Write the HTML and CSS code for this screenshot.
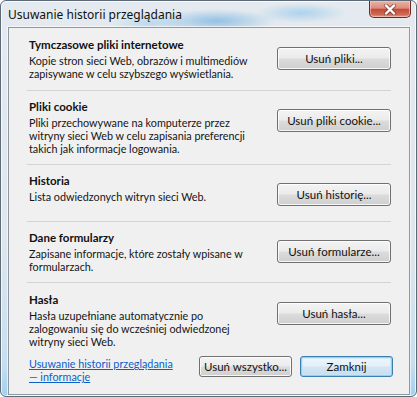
FILE: index.html
```html
<!DOCTYPE html>
<html lang="pl">
<head>
<meta charset="utf-8">
<title>Usuwanie historii przeglądania</title>
<link rel="stylesheet" href="styles.css">
</head>
<body>
<div class="window">
  <div class="titlebar">
    <span class="title">Usuwanie historii przeglądania</span>
    <button class="close" aria-label="Zamknij">
      <svg width="18" height="11" viewBox="0 0 18 11">
        <path d="M5 1.5 L13 9.5 M13 1.5 L5 9.5" stroke="#5a2a22" stroke-width="4.2" stroke-linecap="round" fill="none" opacity="0.55"/>
        <path d="M5 1.5 L13 9.5 M13 1.5 L5 9.5" stroke="#ffffff" stroke-width="2.4" stroke-linecap="round" fill="none"/>
      </svg>
    </button>
  </div>
  <div class="client">
    <div class="section first">
      <div class="text">
        <div class="head">Tymczasowe pliki internetowe</div>
        <div class="desc">Kopie stron sieci Web, obrazów i multimediów<br>zapisywane w celu szybszego wyświetlania.</div>
      </div>
      <button class="btn">Usuń pliki...</button>
    </div>
    <div class="section">
      <div class="text">
        <div class="head">Pliki cookie</div>
        <div class="desc">Pliki przechowywane na komputerze przez<br>witryny sieci Web w celu zapisania preferencji<br>takich jak informacje logowania.</div>
      </div>
      <button class="btn">Usuń pliki cookie...</button>
    </div>
    <div class="section short">
      <div class="text">
        <div class="head">Historia</div>
        <div class="desc">Lista odwiedzonych witryn sieci Web.</div>
      </div>
      <button class="btn">Usuń historię...</button>
    </div>
    <div class="section">
      <div class="text">
        <div class="head">Dane formularzy</div>
        <div class="desc">Zapisane informacje, które zostały wpisane w<br>formularzach.</div>
      </div>
      <button class="btn">Usuń formularze...</button>
    </div>
    <div class="section last">
      <div class="text">
        <div class="head">Hasła</div>
        <div class="desc">Hasła uzupełniane automatycznie po<br>zalogowaniu się do wcześniej odwiedzonej<br>witryny sieci Web.</div>
      </div>
      <button class="btn">Usuń hasła...</button>
    </div>
    <div class="footer">
      <a class="link" href="#">Usuwanie historii przeglądania<br>— informacje</a>
      <div class="actions">
        <button class="btn small">Usuń wszystko...</button>
        <button class="btn small default">Zamknij</button>
      </div>
    </div>
  </div>
</div>
</body>
</html>
```
FILE: styles.css
```css
html, body {
  margin: 0;
  padding: 0;
  background: #ffffff;
}

.window {
  box-sizing: border-box;
  width: 417px;
  height: 397px;
  border: 1px solid #5d6b78;
  border-radius: 6px;
  padding: 0 6px 10px 7px;
  display: flex;
  flex-direction: column;
  font-family: Lato, "Noto Sans", sans-serif;
  font-size: 11px;
  color: #141414;
  background:
    radial-gradient(ellipse 60px 12px at 215px 20px, rgba(120,180,225,0.75), rgba(120,180,225,0) 100%),
    radial-gradient(ellipse 45px 10px at 300px 12px, rgba(150,200,235,0.7), rgba(150,200,235,0) 100%),
    radial-gradient(ellipse 40px 9px at 150px 22px, rgba(160,205,235,0.6), rgba(160,205,235,0) 100%),
    radial-gradient(ellipse 120px 14px at 200px 395px, rgba(120,190,235,0.85), rgba(120,190,235,0) 100%),
    linear-gradient(to bottom, #e4eaef 0%, #dfe6ec 60%, #c7def0 92%, #9fd1f0 100%);
  box-shadow: inset 0 0 0 1px rgba(255,255,255,0.75);
}

.titlebar {
  height: 26px;
  display: flex;
  align-items: flex-start;
  justify-content: space-between;
  flex-shrink: 0;
}

.title {
  font-family: "Noto Sans", "DejaVu Sans", sans-serif;
  font-size: 12px;
  color: #111;
  padding-top: 5px;
}

.close {
  width: 42px;
  height: 17px;
  margin: 0 -1px 0 0;
  padding: 0;
  border: 1px solid #6b2b22;
  border-top: none;
  border-radius: 0 0 5px 5px;
  background: linear-gradient(to bottom, #eab3a4 0%, #dc8c79 45%, #c5493a 52%, #cf6a55 85%, #e7a18c 100%);
  box-shadow: inset 0 0 0 1px rgba(255,210,200,0.55);
  display: flex;
  align-items: center;
  justify-content: center;
}

.client {
  flex: 1;
  border: 1px solid #8d98a3;
  background: #f0f0f0;
  padding: 0 18px 11px 18px;
  display: flex;
  flex-direction: column;
  box-shadow: 0 0 0 1px rgba(255,255,255,0.6);
}

.section {
  display: flex;
  align-items: flex-start;
  justify-content: space-between;
  padding: 9px 0 9px 0;
  border-bottom: 1px solid #d4d4d4;
}

.section.first { padding-top: 10px; padding-bottom: 10px; }
.section.short { padding-bottom: 15px; }
.section.last { border-bottom: none; padding-bottom: 0; padding-top: 10px; }

.text {
  padding-left: 2px;
}

.head {
  font-weight: bold;
  font-size: 11.5px;
  line-height: 14px;
  margin-bottom: 2px;
  color: #111;
}

.desc {
  font-size: 10.8px;
  line-height: 13px;
  color: #141414;
}

.btn {
  box-sizing: border-box;
  width: 114px;
  height: 23px;
  margin-top: 9px;
  padding: 0;
  font-family: Lato, "Noto Sans", sans-serif;
  font-size: 11.5px;
  color: #111;
  border: 1px solid #707070;
  border-radius: 3px;
  background: linear-gradient(to bottom, #f3f3f3 0%, #ebebeb 49%, #dcdcdc 51%, #cfcfcf 100%);
  box-shadow: inset 0 0 0 1px rgba(255,255,255,0.8);
}

.footer {
  display: flex;
  align-items: flex-start;
  justify-content: space-between;
  margin-top: 8px;
}

.link {
  padding-left: 2px;
  padding-top: 1px;
  font-size: 10.8px;
  color: #0a5fc8;
  line-height: 13px;
  text-decoration: underline;
}

.actions {
  display: flex;
  gap: 8px;
  margin-right: -2px;
}

.btn.small {
  width: 93px;
  height: 21px;
  margin-top: 0;
}

.btn.default {
  border-color: #3c7fb1;
  background: linear-gradient(to bottom, #eef6fb 0%, #e3eff7 49%, #d3e6f3 51%, #c8deee 100%);
  box-shadow: inset 0 0 0 1px rgba(150,205,240,1), inset 0 0 0 2px rgba(200,230,248,0.7);
}
```
